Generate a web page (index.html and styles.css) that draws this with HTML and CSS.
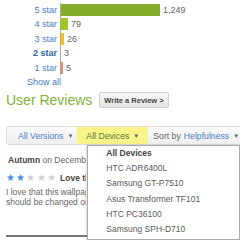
FILE: index.html
```html
<!DOCTYPE html>
<html>
<head>
  <meta charset="UTF-8">
  <title>User Reviews</title>
  <link rel="stylesheet" href="styles.css">
</head>
<body>
  <div class="page">
    <div class="chart">
      <div class="row"><span class="label">5 star</span><div class="track"><div class="bar five" style="width:99px"></div><span class="count">1,249</span></div></div>
      <div class="row"><span class="label">4 star</span><div class="track"><div class="bar four" style="width:7px"></div><span class="count">79</span></div></div>
      <div class="row"><span class="label">3 star</span><div class="track"><div class="bar three" style="width:3px"></div><span class="count">26</span></div></div>
      <div class="row"><span class="label bold">2 star</span><div class="track"><div class="bar" style="width:0"></div><span class="count">3</span></div></div>
      <div class="row"><span class="label">1 star</span><div class="track"><div class="bar one" style="width:2px"></div><span class="count">5</span></div></div>
    </div>
    <a class="show-all">Show all</a>

    <div class="heading">
      <h2>User Reviews</h2>
      <button class="write-btn">Write a Review &gt;</button>
    </div>

    <div class="filters">
      <span class="filter">All Versions <i class="arrow">&#9660;</i></span>
      <span class="filter active">All Devices <i class="arrow">&#9660;</i>
        <ul class="dropdown">
          <li class="head">All Devices</li>
          <li>HTC ADR6400L</li>
          <li>Samsung GT-P7510</li>
          <li>Asus Transformer TF101</li>
          <li>HTC PC36100</li>
          <li>Samsung SPH-D710</li>
        </ul>
      </span>
      <span class="filter sort">Sort by <b>Helpfulness</b> <i class="arrow">&#9660;</i></span>
    </div>

    <div class="review">
      <p class="author"><b>Autumn</b> on December 12, 2011</p>
      <p class="stars"><span class="on">&#9733;&#9733;</span><span class="off">&#9733;&#9733;&#9733;</span><b>Love this wallpaper</b></p>
      <p class="text">I love that this wallpaper changes</p>
      <p class="text">should be changed or improved</p>
    </div>
    <div class="divider"></div>
  </div>
</body>
</html>
```

FILE: styles.css
```css
body {
  margin: 0;
  font-family: "Liberation Sans", Arial, sans-serif;
  background: #fff;
}

.page {
  width: 240px;
  height: 240px;
  overflow: hidden;
}

.chart {
  padding-top: 2.5px;
}

.row {
  display: flex;
  height: 14.5px;
}

.label {
  width: 60px;
  box-sizing: border-box;
  padding-right: 3px;
  text-align: right;
  font-size: 9px;
  line-height: 14.5px;
  color: #4d7ebf;
}

.label.bold {
  font-weight: bold;
  color: #2f61a0;
}

.track {
  display: flex;
  align-items: center;
  border-left: 1px solid #a8a8a8;
}

.bar {
  height: 12px;
}

.bar.five { background: #86ac2c; }
.bar.four { background: #9cc81f; }
.bar.three { background: #f5c21c; }
.bar.one { background: #ee8a62; }

.count {
  margin-left: 3px;
  font-size: 9px;
  color: #666;
}

.show-all {
  display: block;
  margin: 2px 0 0 27px;
  font-size: 9px;
  line-height: 10px;
  color: #4d7ebf;
}

.heading {
  display: flex;
  align-items: center;
  height: 18px;
  margin: 4px 0 0 6px;
}

.heading h2 {
  margin: 0;
  font-size: 14px;
  font-weight: normal;
  color: #83b23a;
}

.write-btn {
  margin-left: 7px;
  height: 16px;
  padding: 0 4px;
  font-family: inherit;
  font-size: 7.5px;
  font-weight: bold;
  color: #444;
  background: linear-gradient(#f8f8f8, #e4e4e4);
  border: 1px solid #cfcfcf;
  border-radius: 2px;
}

.filters {
  display: flex;
  align-items: stretch;
  height: 19px;
  margin: 17px 0 0 6px;
  box-sizing: border-box;
  background: linear-gradient(#fafafa, #efefef);
  border: 1px solid #dcdcdc;
  border-right: none;
  border-radius: 3px 0 0 3px;
  font-size: 8.7px;
}

.filter {
  display: flex;
  align-items: center;
  padding: 0 4px 0 11px;
  color: #4d7ebf;
  white-space: nowrap;
}

.filter.active {
  position: relative;
  padding: 0 9px;
  background: #f8f48a;
  color: #5b7a3a;
}

.filter.sort {
  padding-left: 5px;
  color: #666;
}

.filter.sort b {
  font-weight: normal;
  color: #4d7ebf;
  margin-left: 3px;
}

.arrow {
  font-style: normal;
  font-size: 6px;
  color: #666;
  margin-left: 4px;
}

.dropdown {
  position: absolute;
  top: 18px;
  left: 10px;
  width: 151px;
  margin: 0;
  padding: 0 0 2px;
  list-style: none;
  background: #fff;
  border: 1px solid #aaa;
  box-shadow: 0 1px 3px rgba(0, 0, 0, 0.25);
  z-index: 2;
}

.dropdown li {
  padding-left: 18px;
  font-size: 8.5px;
  line-height: 15.2px;
  color: #5a5a5a;
}

.dropdown li.head {
  font-weight: bold;
  color: #444;
}

.review {
  width: 80px;
  margin: 9px 0 0 6px;
  overflow: hidden;
  white-space: nowrap;
  font-size: 8.5px;
  color: #666;
}

.review p {
  margin: 0;
}

.author {
  padding-left: 2px;
  line-height: 12px;
}

.author b {
  color: #444;
}

.stars {
  margin-top: 6px !important;
  line-height: 12px;
}

.stars .on,
.stars .off {
  font-size: 9.5px;
  letter-spacing: 1.2px;
}

.stars .on { color: #3f8fd8; }
.stars .off { color: #d0d0d0; }

.stars b {
  margin-left: 3px;
  color: #444;
}

.text {
  line-height: 10px;
}

.stars + .text {
  margin-top: 3px;
}

.divider {
  margin: 28px 0 0 6px;
  width: 82px;
  height: 2px;
  background: #777;
}
```
